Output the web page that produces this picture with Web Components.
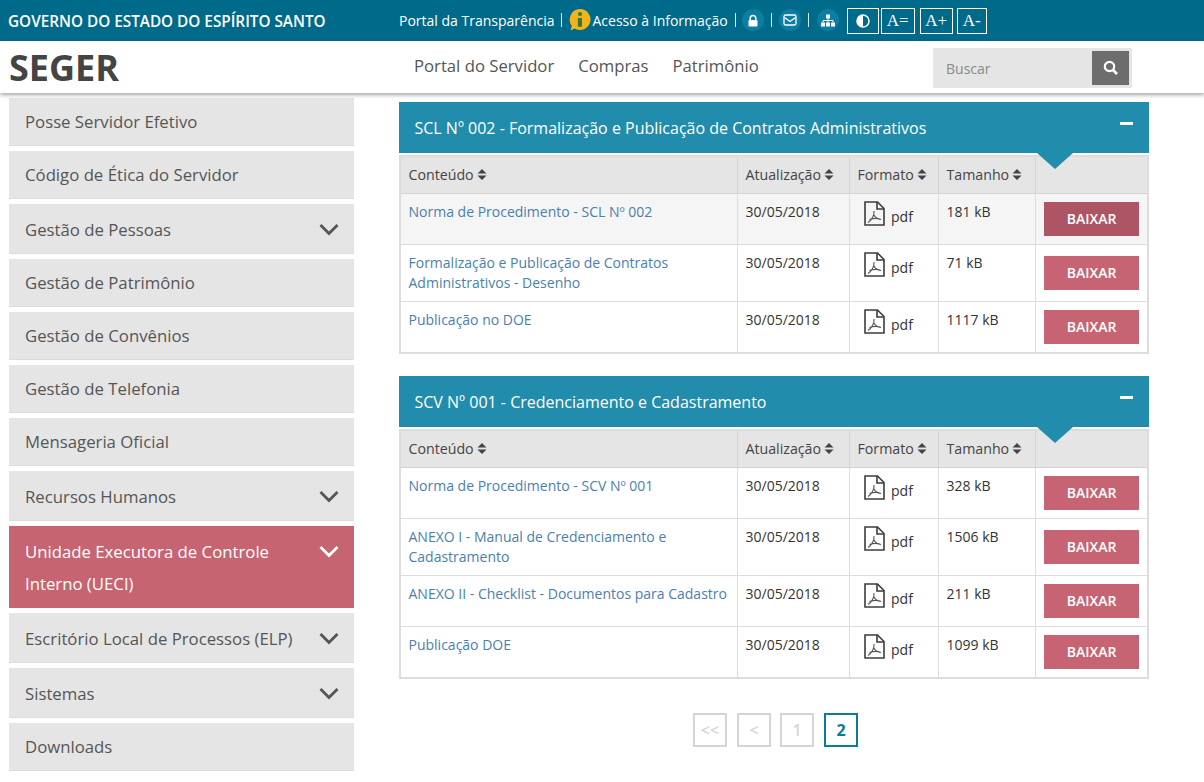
<!DOCTYPE html>
<html lang="pt-BR">
<head>
<meta charset="utf-8">
<title>SEGER</title>
<style>
  html, body { margin: 0; height: 782px; overflow: hidden; background: #fff; font-family: "Open Sans", sans-serif; }
  .content { display: grid; grid-template-columns: 345px 750px; column-gap: 45px; padding-left: 9px; }
  .docs { padding-top: 9px; }
</style>
</head>
<body>
<gov-bar></gov-bar>
<site-header></site-header>
<div class="content">
  <side-nav>
    <nav-entry>Posse Servidor Efetivo</nav-entry>
    <nav-entry>Código de Ética do Servidor</nav-entry>
    <nav-entry chevron>Gestão de Pessoas</nav-entry>
    <nav-entry>Gestão de Patrimônio</nav-entry>
    <nav-entry>Gestão de Convênios</nav-entry>
    <nav-entry>Gestão de Telefonia</nav-entry>
    <nav-entry>Mensageria Oficial</nav-entry>
    <nav-entry chevron>Recursos Humanos</nav-entry>
    <nav-entry chevron active>Unidade Executora de Controle Interno (UECI)</nav-entry>
    <nav-entry chevron>Escritório Local de Processos (ELP)</nav-entry>
    <nav-entry chevron>Sistemas</nav-entry>
    <nav-entry>Downloads</nav-entry>
  </side-nav>
  <div class="docs">
    <doc-panel heading="SCL Nº 002 - Formalização e Publicação de Contratos Administrativos">
      <doc-row date="30/05/2018" size="181 kB" hover>Norma de Procedimento - SCL Nº 002</doc-row>
      <doc-row date="30/05/2018" size="71 kB">Formalização e Publicação de Contratos Administrativos - Desenho</doc-row>
      <doc-row date="30/05/2018" size="1117 kB">Publicação no DOE</doc-row>
    </doc-panel>
    <doc-panel heading="SCV Nº 001 - Credenciamento e Cadastramento">
      <doc-row date="30/05/2018" size="328 kB">Norma de Procedimento - SCV Nº 001</doc-row>
      <doc-row date="30/05/2018" size="1506 kB">ANEXO I - Manual de Credenciamento e Cadastramento</doc-row>
      <doc-row date="30/05/2018" size="211 kB">ANEXO II - Checklist - Documentos para Cadastro</doc-row>
      <doc-row date="30/05/2018" size="1099 kB">Publicação DOE</doc-row>
    </doc-panel>
    <page-nav></page-nav>
  </div>
</div>

<script>
const COLUMNS = "337px 112px 89px 97px 111px";

class GovBar extends HTMLElement {
  constructor() {
    super();
    this.attachShadow({ mode: "open" });
    this.shadowRoot.innerHTML = `
      <style>
        :host { display: flex; align-items: center; height: 41px; background: #006a8a; color: #fff; font-family: "Open Sans", sans-serif; font-size: 14px; }
        .title { width: 391px; padding-left: 8px; font-weight: 600; font-size: 15.3px; white-space: nowrap; }
        .links { display: flex; align-items: center; height: 41px; padding-bottom: 1px; box-sizing: border-box; white-space: nowrap; }
        .sep { width: 1px; height: 14px; background: #dfe9ec; margin: 0 7px; }
        .round { width: 22px; height: 22px; border-radius: 50%; background: #0b7ea2; display: flex; align-items: center; justify-content: center; }
        .info { margin: 0 2px 0 0; display: block; }
        .tools { display: flex; margin-left: 8px; gap: 2px; }
        .tool { box-sizing: border-box; height: 26px; border: 1px solid #fff; display: flex; align-items: center; justify-content: center; font-family: "Liberation Serif", serif; font-size: 17px; }
      </style>
      <div class="title">GOVERNO DO ESTADO DO ESPÍRITO SANTO</div>
      <div class="links">
        <span>Portal da Transparência</span><span class="sep" style="margin:0 7px 0 6px"></span>
        <svg class="info" width="22" height="24" viewBox="0 0 22 24"><path d="M11 1a10.500 10.500 0 1 1-5.400 19.500L1.500 22.500l1.300-4.700A10.500 10.500 0 0 1 11 1z" fill="#f3b41b"/><circle cx="11" cy="6" r="2" fill="#2f7a3c"/><path d="M8.800 10h4.200v7.500q0 1.500-2.100 1.500t-2.100-1.500z" fill="#2f7a3c"/></svg>
        <span>Acesso à Informação</span><span class="sep" style="margin-right:6px"></span>
        <span class="round"><svg width="12" height="13" viewBox="0 0 12 13"><path d="M3.200 6.500V4.200a2.800 2.800 0 0 1 5.600 0v2.300" fill="none" stroke="#fff" stroke-width="1.500"/><rect x="1.500" y="6" width="9" height="6.500" rx="1" fill="#fff"/></svg></span><span class="sep"></span>
        <span class="round"><svg width="14" height="12" viewBox="0 0 14 12"><rect x="1" y="1" width="12" height="10" rx="1.500" fill="none" stroke="#fff" stroke-width="1.300"/><path d="M1.500 3.500L7 7.500l5.500-4" fill="none" stroke="#fff" stroke-width="1.300"/></svg></span><span class="sep" style="margin-right:8px"></span>
        <span class="round"><svg width="14" height="13" viewBox="0 0 14 13"><rect x="5" y="0.500" width="4" height="4" fill="#fff"/><rect x="0" y="8.500" width="4" height="4" fill="#fff"/><rect x="5" y="8.500" width="4" height="4" fill="#fff"/><rect x="10" y="8.500" width="4" height="4" fill="#fff"/><path d="M2 8.500V6.500h10v2M7 4.500v4" fill="none" stroke="#fff"/></svg></span>
      </div>
      <div class="tools">
        <span class="tool" style="width:32px"><svg width="14" height="14" viewBox="0 0 14 14"><circle cx="7" cy="7" r="6" fill="none" stroke="#fff" stroke-width="1.500"/><path d="M7 1a6 6 0 0 0 0 12z" fill="#fff"/></svg></span>
        <span class="tool" style="width:34px">A=</span>
        <span class="tool" style="width:33px;margin-left:3px">A+</span>
        <span class="tool" style="width:30px;margin-left:2px">A-</span>
      </div>`;
  }
}

class SiteHeader extends HTMLElement {
  constructor() {
    super();
    this.attachShadow({ mode: "open" });
    this.shadowRoot.innerHTML = `
      <style>
        :host { display: flex; align-items: center; position: relative; z-index: 2; height: 52px; background: #fff; box-shadow: 0 2px 4px rgba(0,0,0,.35); font-family: "Open Sans", sans-serif; }
        .brand { flex: none; width: 414px; padding: 1px 0 0 9px; box-sizing: border-box; font-size: 36px; font-weight: 700; color: #444; line-height: 51px; }
        nav { display: flex; gap: 24px; width: 519px; font-size: 16.7px; color: #555; padding-bottom: 3px; }
        .search { flex: none; display: flex; align-items: center; justify-content: space-between; width: 199px; height: 40px; margin-top: 1px; background: #e5e5e5; box-sizing: border-box; padding: 0 3px 0 13px; font-size: 14px; color: #888; }
        .search > span:first-child { padding-top: 2px; }
        .btn { width: 37px; height: 34px; background: #6d6d6d; display: flex; align-items: center; justify-content: center; }
      </style>
      <div class="brand">SEGER</div>
      <nav><span>Portal do Servidor</span><span>Compras</span><span>Patrimônio</span></nav>
      <div class="search">
        <span>Buscar</span>
        <span class="btn"><svg width="15" height="15" viewBox="0 0 15 15"><circle cx="6.500" cy="6.500" r="4.700" fill="none" stroke="#fff" stroke-width="2.200"/><path d="M10 10l4 4" stroke="#fff" stroke-width="2.600"/></svg></span>
      </div>`;
  }
}

class SideNav extends HTMLElement {
  constructor() {
    super();
    this.attachShadow({ mode: "open" });
    this.shadowRoot.innerHTML = `
      <style>:host { display: flex; flex-direction: column; gap: 5px; padding-top: 5px; }</style>
      <slot></slot>`;
  }
}

class NavEntry extends HTMLElement {
  constructor() {
    super();
    this.attachShadow({ mode: "open" });
  }

  connectedCallback() {
    const chevron = this.hasAttribute("chevron")
      ? `<svg class="chev" width="20" height="13" viewBox="0 0 20 13"><path d="M1.500 2l8.500 8.500L18.500 2" fill="none" stroke="currentColor" stroke-width="2.800"/></svg>`
      : "";
    this.shadowRoot.innerHTML = `
      <style>
        :host { display: flex; justify-content: space-between; align-items: flex-start; box-sizing: border-box; padding: 8px 15px 7px 16px; background: #e5e5e5; border-bottom: 1px solid #dcdcdc; color: #555; font-family: "Open Sans", sans-serif; font-size: 16.75px; line-height: 32px; }
        :host([chevron]) { padding-top: 10px; padding-bottom: 7px; }
        :host([active]) { background: #c66472; color: #fff; border-bottom-color: #c66472; }
        .label { max-width: 290px; }
        .chev { display: block; margin-top: 9px; flex: none; }
      </style>
      <span class="label"><slot></slot></span>${chevron}`;
  }
}

class DocPanel extends HTMLElement {
  constructor() {
    super();
    this.attachShadow({ mode: "open" });
  }

  connectedCallback() {
    const sort = `<svg width="10" height="11" viewBox="0 0 10 11"><path d="M5 0l4.500 4.500h-9zM5 11L.5 6.500h9z" fill="#444"/></svg>`;
    const heads = ["Conteúdo", "Atualização", "Formato", "Tamanho"];
    this.shadowRoot.innerHTML = `
      <style>
        :host { display: block; position: relative; margin-bottom: 22px; font-family: "Open Sans", sans-serif; }
        .bar { display: flex; justify-content: space-between; height: 51px; box-sizing: border-box; padding: 16px 16px 0 15.500px; background: #218cab; color: #fff; font-size: 16px; line-height: 21px; }
        .minus { width: 13px; height: 3px; background: #fff; margin-top: 4px; }
        .arrow { position: absolute; left: 638px; top: 51px; width: 0; height: 0; border-left: 18.500px solid transparent; border-right: 18.500px solid transparent; border-top: 16px solid #218cab; }
        .table { margin-top: 2px; border: 2px solid #ddd; }
        .head { display: grid; grid-template-columns: ${COLUMNS}; height: 37px; background: #e5e5e5; color: #444; font-size: 14.2px; }
        .head div { display: flex; align-items: center; gap: 3px; padding: 0 0 2px 7.500px; border-right: 1px solid #d3d3d3; border-bottom: 1px solid #d3d3d3; }
        .head div:last-child { border-right: 0; }
      </style>
      <div class="bar"><span>${this.getAttribute("heading")}</span><span class="minus"></span></div>
      <div class="arrow"></div>
      <div class="table">
        <div class="head">${heads.map(h => `<div>${h} ${sort}</div>`).join("")}<div></div></div>
        <slot></slot>
      </div>`;
  }
}

class DocRow extends HTMLElement {
  constructor() {
    super();
    this.attachShadow({ mode: "open" });
  }

  connectedCallback() {
    this.shadowRoot.innerHTML = `
      <style>
        :host { display: grid; grid-template-columns: ${COLUMNS}; font-family: "Open Sans", sans-serif; font-size: 14px; line-height: 20px; color: #333; background: #fff; }
        :host([hover]) { background: #f5f5f5; }
        .cell { padding: 8px 8px 8px 7.500px; border-right: 1px solid #ddd; border-bottom: 1px solid #ddd; }
        :host(:last-child) .cell { border-bottom: 0; }
        .name { color: #4a7fb0; }
        .fmt { display: flex; align-items: flex-start; gap: 6px; padding: 7px 0 0 14px; }
        .fmt span { margin-top: 6px; }
        .act { display: flex; align-items: center; justify-content: center; padding: 8px; border-right: 0; }
        .btn { width: 95px; height: 34px; padding-bottom: 1px; box-sizing: border-box; background: #c76473; color: #fff; font-size: 14px; font-weight: 600; display: flex; align-items: center; justify-content: center; }
        :host([hover]) .btn { background: #ae5565; }
      </style>
      <div class="cell name"><slot></slot></div>
      <div class="cell">${this.getAttribute("date")}</div>
      <div class="cell fmt">
        <svg width="21" height="25" viewBox="0 0 21 25"><path d="M1 1h12.500L20 7.500V24H1z" fill="none" stroke="#3c3c3c" stroke-width="1.600"/><path d="M13 1v7h7" fill="none" stroke="#3c3c3c" stroke-width="1.600"/><path d="M10 10c.5 4-2 9-6 11.500M10 14c1 2.500 3.500 4 7 4.500M5.500 18.500c3-1 7-1.500 10.500-.5" fill="none" stroke="#555" stroke-width="1.100"/></svg>
        <span>pdf</span>
      </div>
      <div class="cell">${this.getAttribute("size")}</div>
      <div class="cell act"><span class="btn">BAIXAR</span></div>`;
  }
}

class PageNav extends HTMLElement {
  constructor() {
    super();
    this.attachShadow({ mode: "open" });
    const pages = [["&lt;&lt;"], ["&lt;"], ["1"], ["2", true]];
    this.shadowRoot.innerHTML = `
      <style>
        :host { display: flex; justify-content: center; gap: 10px; padding: 12px 0 0 3px; font-family: "Open Sans", sans-serif; }
        span { box-sizing: border-box; width: 34px; height: 34px; border: 2px solid #d5d5d5; color: #d5d5d5; display: flex; align-items: center; justify-content: center; font-size: 16px; font-weight: 600; }
        span:nth-child(4) { margin-left: -1px; }
        .on { border-color: #0d7a9b; color: #0d7a9b; font-weight: 700; }
      </style>
      ${pages.map(p => `<span class="${p[1] ? "on" : ""}">${p[0]}</span>`).join("")}`;
  }
}

customElements.define("gov-bar", GovBar);
customElements.define("site-header", SiteHeader);
customElements.define("side-nav", SideNav);
customElements.define("nav-entry", NavEntry);
customElements.define("doc-panel", DocPanel);
customElements.define("doc-row", DocRow);
customElements.define("page-nav", PageNav);
</script>
</body>
</html>
